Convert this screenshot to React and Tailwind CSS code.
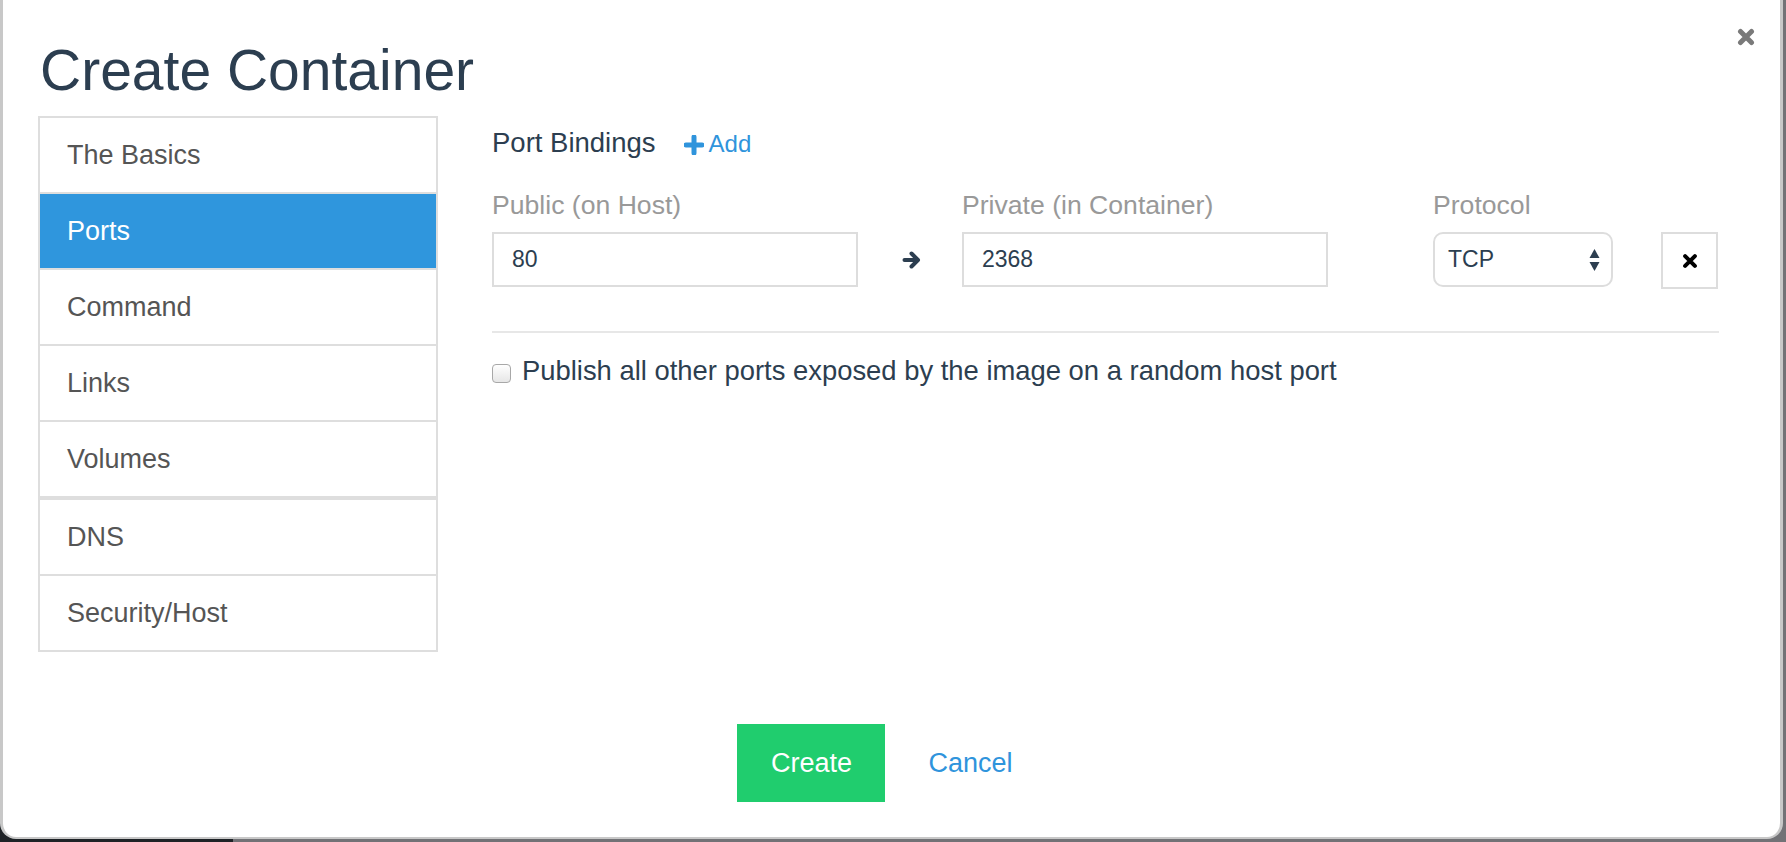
// App.jsx - Create Container modal, Ports tab

const tabs = ["The Basics", "Ports", "Command", "Links", "Volumes", "DNS", "Security/Host"];

function TimesIcon({ size, color, stroke }) {
    return (
        <svg width={size} height={size} viewBox="0 0 18 18" fill="none">
            <path d="M3.5 3.5 L14.5 14.5 M14.5 3.5 L3.5 14.5" stroke={color} strokeWidth={stroke} strokeLinecap="round" />
        </svg>
    );
}

function ArrowRight() {
    return (
        <svg width="19" height="20" viewBox="0 0 19 20" fill="none">
            <path d="M2.5 10 H15" stroke="#2c3e50" strokeWidth="4" strokeLinecap="round" />
            <path d="M9.5 3.5 L16 10 L9.5 16.5" stroke="#2c3e50" strokeWidth="4" strokeLinecap="round" strokeLinejoin="round" />
        </svg>
    );
}

function PlusIcon() {
    return (
        <svg width="20" height="20" viewBox="0 0 20 20" fill="none">
            <path d="M10 2 V18 M2 10 H18" stroke="#2f94dc" strokeWidth="5" strokeLinecap="round" />
        </svg>
    );
}

function Sidebar() {
    return (
        <div className="w-[400px] shrink-0 border-t-2 border-[#dedede]">
            {tabs.map((t) => {
                const active = t === "Ports";
                const thick = t === "Volumes";
                return (
                    <div
                        key={t}
                        className={
                            "flex items-center pl-[27px] border-x-2 border-[#dedede] text-[27px] " +
                            (thick ? "h-[78px] border-b-4 " : "h-[76px] border-b-2 ") +
                            (active ? "bg-[#2f96dd] text-white" : "bg-white text-[#555555]")
                        }
                    >
                        {t}
                    </div>
                );
            })}
        </div>
    );
}

function PortsPanel() {
    return (
        <div className="ml-[54px] w-[1227px]">
            <div className="mt-[8px] h-[38px] flex items-baseline leading-[38px]">
                <span className="text-[27.5px] text-[#2c3e50]">Port Bindings</span>
                <span className="ml-[28px] flex items-baseline text-[24px] text-[#2f94dc]">
                    <span className="self-center mr-[5px] translate-y-[1px]"><PlusIcon /></span>
                    Add
                </span>
            </div>

            <div className="mt-[24px] grid grid-cols-[366px_104px_366px_105px_180px_48px_57px] grid-rows-[38px_55px] gap-y-[8px]">
                <div className="text-[26.6px] leading-[38px] text-[#999999]">Public (on Host)</div>
                <div />
                <div className="text-[26.6px] leading-[38px] text-[#999999]">Private (in Container)</div>
                <div />
                <div className="text-[26.6px] leading-[38px] text-[#999999]">Protocol</div>
                <div />
                <div />

                <div className="h-[55px] border-2 border-[#dddddd] flex items-center pl-[18px] text-[23px] text-[#2c3e50]">80</div>
                <div className="flex items-center justify-center pl-[2px]"><ArrowRight /></div>
                <div className="h-[55px] border-2 border-[#dddddd] flex items-center pl-[18px] text-[23px] text-[#2c3e50]">2368</div>
                <div />
                <div className="h-[55px] border-2 border-[#dddddd] rounded-[10px] flex items-center justify-between pl-[13px] pr-[11px] text-[23px] text-[#2c3e50]">
                    <span>TCP</span>
                    <svg width="11" height="22" viewBox="0 0 11 22">
                        <path d="M5.5 0 L10.5 9 H0.5 Z" fill="#2c3e50" />
                        <path d="M5.5 22 L10.5 13 H0.5 Z" fill="#2c3e50" />
                    </svg>
                </div>
                <div />
                <div className="h-[57px] border-2 border-[#dddddd] flex items-center justify-center">
                    <TimesIcon size={16} color="#000000" stroke={4.5} />
                </div>
            </div>

            <div className="mt-[44px] h-[2px] bg-[#e7e7e7]" />

            <div className="mt-[19px] h-[38px] flex items-center">
                <div className="w-[19px] h-[19px] rounded-[4px] border border-[#a8a8a8] bg-gradient-to-b from-white to-[#e6e6e6] translate-y-[2px]" />
                <span className="ml-[11px] text-[27.4px] text-[#2c3e50]">Publish all other ports exposed by the image on a random host port</span>
            </div>
        </div>
    );
}

export default function App() {
    return (
        <div
            className="relative w-[1786px] h-[842px] bg-[#727276] overflow-hidden"
            style={{ fontFamily: '"Liberation Sans", Arial, sans-serif' }}
        >
            <div className="absolute left-0 bottom-0 w-[233px] h-[30px] bg-[#1e2226]" />
            <div className="relative w-[1783px] h-[839px] bg-white border-x-[3px] border-b-2 border-[#c8c8c8] rounded-b-[16px]">
                <button className="absolute top-[28px] right-[25px]">
                    <TimesIcon size={18} color="#7a7a7a" stroke={5} />
                </button>

                <h1 className="pt-[42px] pl-[37px] text-[57px] leading-[56px] text-[#2c3e50]">Create Container</h1>

                <div className="mt-[18px] pl-[35px] flex items-start">
                    <Sidebar />
                    <PortsPanel />
                </div>

                <div className="mt-[72px] flex justify-center">
                    <button className="w-[148px] h-[78px] bg-[#20cd6e] text-white text-[27px]">Create</button>
                    <button className="pl-[43px] pr-[33px] text-[27px] text-[#2f94dc]">Cancel</button>
                </div>
            </div>
        </div>
    );
}
